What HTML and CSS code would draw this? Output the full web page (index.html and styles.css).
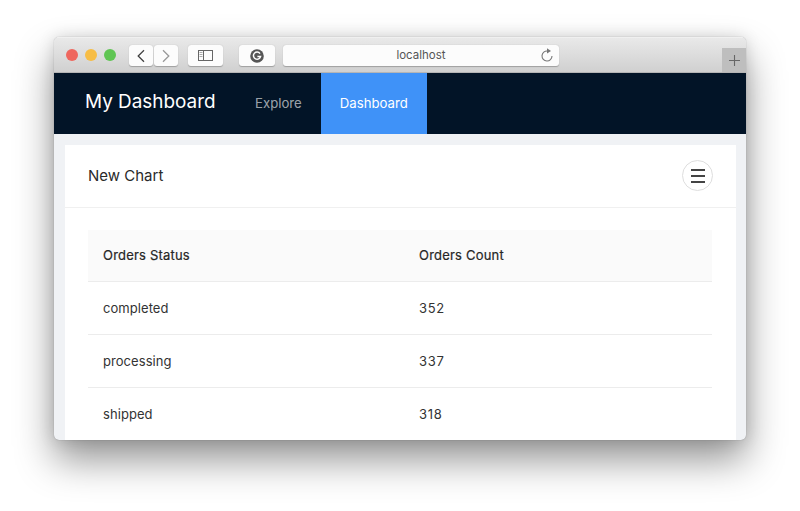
FILE: index.html
```html
<!DOCTYPE html>
<html lang="en">
<head>
<meta charset="utf-8">
<title>My Dashboard</title>
<link rel="stylesheet" href="styles.css">
</head>
<body>
<div class="window">
  <div class="chrome">
    <div class="lights"><span class="light red"></span><span class="light yellow"></span><span class="light green"></span></div>
    <div class="navpair">
      <span class="tbtn nav"><svg width="10" height="16" viewBox="0 0 10 16"><path d="M8 2.200 2.200 8 8 13.800" fill="none" stroke="#444" stroke-width="1.300"/></svg></span>
      <span class="tbtn nav"><svg width="10" height="16" viewBox="0 0 10 16"><path d="M2 2.200 7.800 8 2 13.800" fill="none" stroke="#999" stroke-width="1.300"/></svg></span>
    </div>
    <span class="tbtn side"><svg width="15" height="11" viewBox="0 0 15 11"><rect x=".5" y=".5" width="14" height="10" fill="none" stroke="#666"/><path d="M5.500 0v11" stroke="#666"/><path d="M1.500 2.500h3M1.500 4.500h3M1.500 6.500h3" stroke="#aaa"/></svg></span>
    <span class="tbtn side ext"><svg width="14" height="14" viewBox="0 0 14 14"><circle cx="7" cy="7" r="6.800" fill="#555"/><path d="M10 4.600A3.600 3.600 0 1 0 10.600 7.400H7.400" fill="none" stroke="#fff" stroke-width="1.500"/></svg></span>
    <div class="address">
      <span class="url">localhost</span>
      <svg class="reload" width="14" height="15" viewBox="0 0 14 15"><path d="M7.500 3A5 5 0 1 0 12 8" fill="none" stroke="#777" stroke-width="1.100"/><path d="M7 .3 11 3 7 5.600z" fill="#777"/></svg>
    </div>
    <span class="newtab"><svg width="11" height="11" viewBox="0 0 11 11"><path d="M5.500 0v11M0 5.500h11" stroke="#666" stroke-width="1.100"/></svg></span>
  </div>
  <nav class="navbar">
    <div class="logo">My Dashboard</div>
    <a class="item">Explore</a>
    <a class="item active">Dashboard</a>
  </nav>
  <main class="content">
    <section class="card">
      <header class="card-head">
        <h1 class="card-title">New Chart</h1>
        <button class="menu-btn" type="button" aria-label="Menu"><span class="bars"><i></i><i></i><i></i></span></button>
      </header>
      <div class="card-body">
        <table class="table">
          <thead><tr><th class="c1">Orders Status</th><th>Orders Count</th></tr></thead>
          <tbody>
            <tr><td class="c1">completed</td><td class="num">352</td></tr>
            <tr><td class="c1">processing</td><td class="num">337</td></tr>
            <tr><td class="c1">shipped</td><td class="num">318</td></tr>
          </tbody>
        </table>
      </div>
    </section>
  </main>
</div>
</body>
</html>
```
FILE: styles.css
```css
* { box-sizing: border-box; }
html, body { margin: 0; height: 100%; }
body {
  background: #fff;
  overflow: hidden;
  font-family: Inter, "Liberation Sans", sans-serif;
  padding: 37px 54px 0;
}
.window {
  width: 692px;
  height: 403px;
  border-radius: 5px;
  overflow: hidden;
  background: #f0f2f5;
  display: flex;
  flex-direction: column;
  box-shadow: 0 20px 38px rgba(0, 0, 0, .42), 0 0 16px rgba(0, 0, 0, .13), 0 0 1px rgba(0, 0, 0, .4);
}
.chrome {
  height: 36px;
  flex: none;
  display: flex;
  align-items: flex-start;
  padding-top: 7px;
  background: linear-gradient(#e9e9e9, #d0d0d0);
  border-top: 1px solid #f0f0f0;
  border-bottom: 1px solid #b5b5b5;
  position: relative;
}
.lights { display: flex; gap: 7px; margin: 4px 0 0 12px; }
.light { width: 12px; height: 12px; border-radius: 50%; display: block; }
.red { background: #ef675e; }
.yellow { background: #f7bd45; }
.green { background: #5fc553; }
.navpair { display: flex; gap: 1px; margin-left: 13px; }
.tbtn {
  height: 21px;
  background: #fcfcfc;
  border-radius: 3px;
  display: flex;
  align-items: center;
  justify-content: center;
  box-shadow: 0 .5px 1px rgba(0, 0, 0, .25);
}
.nav { width: 24px; }
.side { width: 35px; margin-left: 10px; }
.ext { width: 36px; margin-left: 16px; }
.address {
  width: 276px;
  height: 21px;
  margin-left: 8px;
  background: #fcfcfc;
  border-radius: 3px;
  box-shadow: 0 .5px 1px rgba(0, 0, 0, .25);
  position: relative;
  text-align: center;
  font-size: 11.500px;
  line-height: 21px;
  color: #555;
}
.reload { position: absolute; right: 5px; top: 3px; }
.newtab {
  position: absolute;
  right: 0;
  bottom: 0;
  width: 24px;
  height: 24px;
  background: #bebebe;
  display: flex;
  align-items: center;
  justify-content: center;
}
.navbar {
  height: 61px;
  flex: none;
  background: #021427;
  display: flex;
  align-items: stretch;
  padding-left: 31px;
}
.logo {
  color: #fff;
  font-size: 18.900px;
  line-height: 58px;
  width: 151px;
  white-space: nowrap;
}
.item {
  color: rgba(255, 255, 255, .62);
  font-size: 13.200px;
  line-height: 61px;
  padding: 0 19px;
}
.item.active { background: #3f92f8; color: #fff; }
.content { flex: 1; min-height: 0; padding: 11px 10px 0 11px; overflow: hidden; }
.card { background: #fff; height: 100%; overflow: hidden; }
.card-head {
  height: 63px;
  display: flex;
  align-items: center;
  justify-content: space-between;
  padding: 0 23px 1px 23px;
  border-bottom: 1px solid #f0f0f0;
}
.card-title { margin: 0; font-size: 15px; font-weight: 400; color: #2a2a2a; }
.menu-btn {
  width: 31px;
  height: 31px;
  padding: 0;
  border-radius: 50%;
  border: 1px solid #dedede;
  background: #fff;
  display: flex;
  align-items: center;
  justify-content: center;
}
.bars { display: flex; flex-direction: column; gap: 4px; width: 14px; }
.bars i { display: block; height: 2px; background: #444; }
.card-body { padding: 22px 24px 0 23px; }
.table { width: 100%; border-collapse: collapse; table-layout: fixed; font-size: 13px; color: #333; letter-spacing: .06px; }
.table th, .table td { padding: 0 15px; text-align: left; height: 53px; border-bottom: 1px solid #ececec; }
.table th { height: 51px; background: #fafafa; font-weight: 400; color: #262626; letter-spacing: .2px; -webkit-text-stroke: .2px #262626; }
.table .num { letter-spacing: .7px; }
.c1 { width: 316px; }
```
